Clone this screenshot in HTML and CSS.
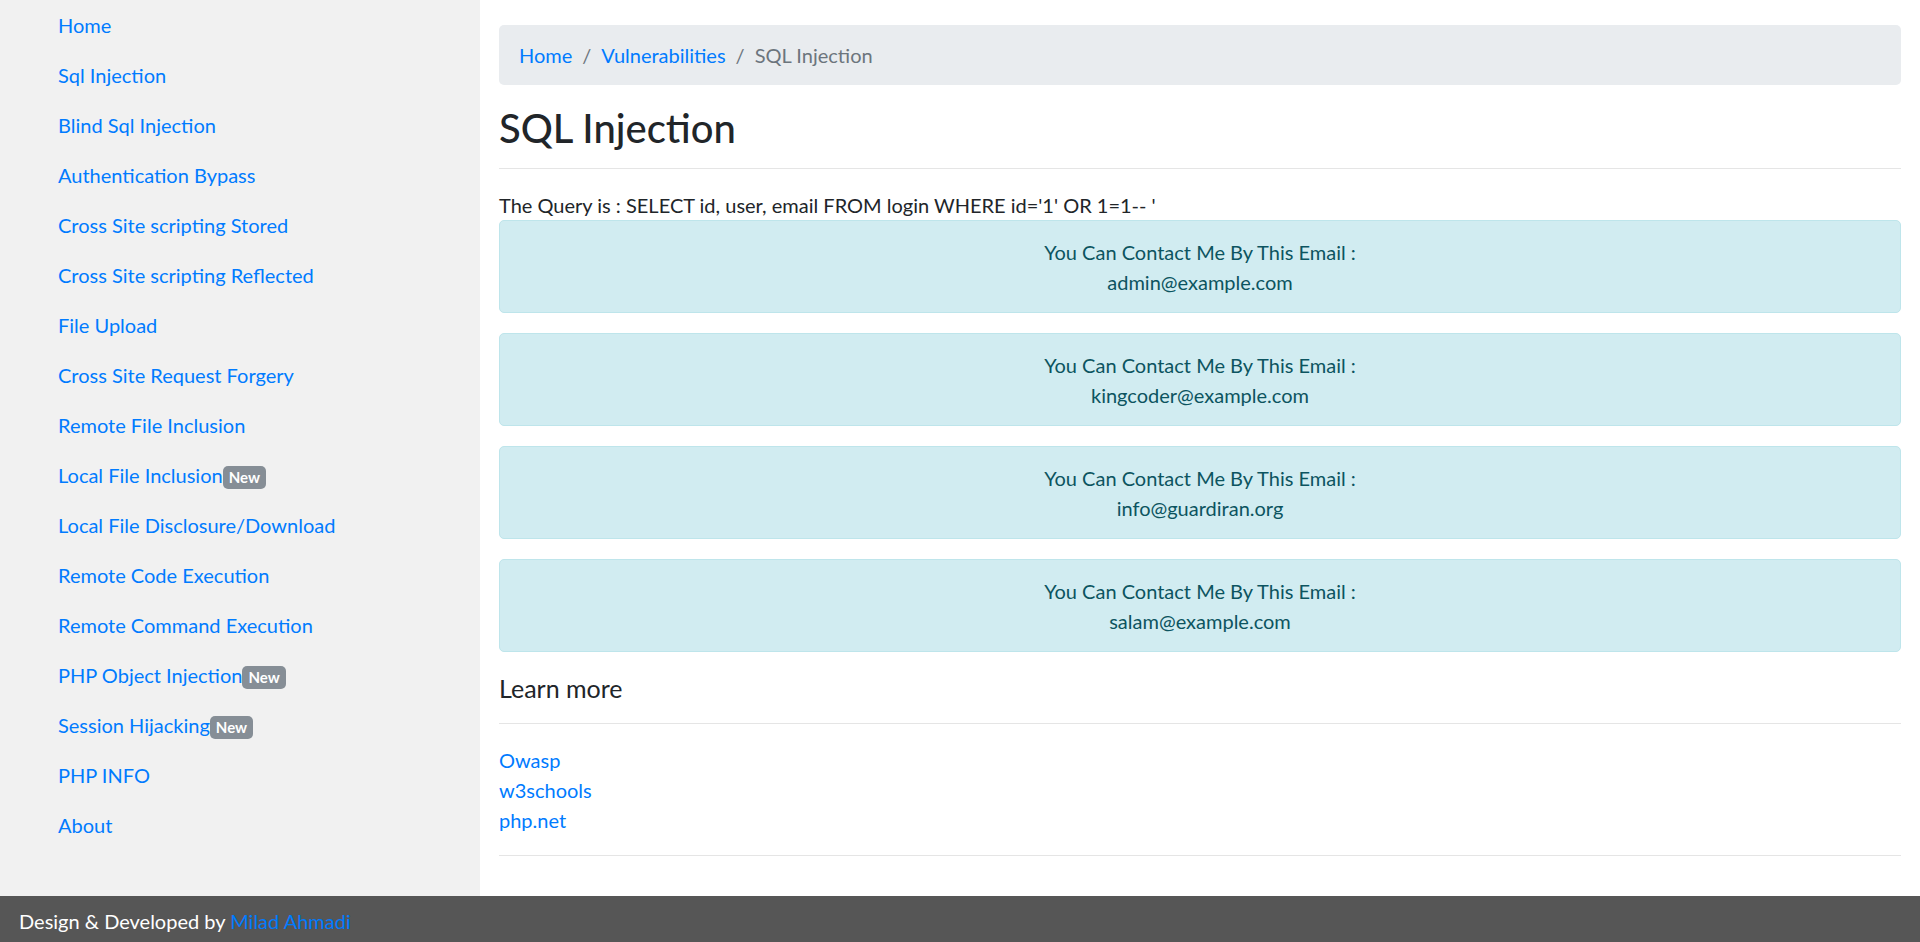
FILE: index.html
```html
<!DOCTYPE html>
<html lang="en">
<head>
<meta charset="utf-8">
<title>SQL Injection</title>
<link rel="stylesheet" href="styles.css">
</head>
<body>
<div class="page">
  <aside class="sidebar">
    <ul class="nav">
      <li><a class="nav-link" href="#">Home</a></li>
      <li><a class="nav-link" href="#">Sql Injection</a></li>
      <li><a class="nav-link" href="#">Blind Sql Injection</a></li>
      <li><a class="nav-link" href="#">Authentication Bypass</a></li>
      <li><a class="nav-link" href="#">Cross Site scripting Stored</a></li>
      <li><a class="nav-link" href="#">Cross Site scripting Reflected</a></li>
      <li><a class="nav-link" href="#">File Upload</a></li>
      <li><a class="nav-link" href="#">Cross Site Request Forgery</a></li>
      <li><a class="nav-link" href="#">Remote File Inclusion</a></li>
      <li><a class="nav-link" href="#">Local File Inclusion<span class="badge">New</span></a></li>
      <li><a class="nav-link" href="#">Local File Disclosure/Download</a></li>
      <li><a class="nav-link" href="#">Remote Code Execution</a></li>
      <li><a class="nav-link" href="#">Remote Command Execution</a></li>
      <li><a class="nav-link" href="#">PHP Object Injection<span class="badge">New</span></a></li>
      <li><a class="nav-link" href="#">Session Hijacking<span class="badge">New</span></a></li>
      <li><a class="nav-link" href="#">PHP INFO</a></li>
      <li><a class="nav-link" href="#">About</a></li>
    </ul>
  </aside>
  <main class="main">
    <nav aria-label="breadcrumb">
      <ol class="breadcrumb">
        <li class="breadcrumb-item"><a href="#">Home</a></li>
        <li class="breadcrumb-item"><a href="#">Vulnerabilities</a></li>
        <li class="breadcrumb-item active">SQL Injection</li>
      </ol>
    </nav>
    <h1 class="title">SQL Injection</h1>
    <hr class="rule rule-title">
    <p class="query">The Query is : SELECT id, user, email FROM login WHERE id='1' OR 1=1-- '</p>
    <div class="alert">You Can Contact Me By This Email :<br>admin@example.com</div>
    <div class="alert">You Can Contact Me By This Email :<br>kingcoder@example.com</div>
    <div class="alert">You Can Contact Me By This Email :<br>info@guardiran.org</div>
    <div class="alert">You Can Contact Me By This Email :<br>salam@example.com</div>
    <h5 class="learn">Learn more</h5>
    <hr class="rule rule-learn">
    <div class="links">
      <a href="#">Owasp</a>
      <a href="#">w3schools</a>
      <a href="#">php.net</a>
    </div>
    <hr class="rule rule-end">
  </main>
</div>
<footer class="footer">Design &amp; Developed by <a href="#">Milad Ahmadi</a></footer>
</body>
</html>
```
FILE: styles.css
```css
html, body {
  margin: 0;
  padding: 0;
  height: 100%;
}
body {
  display: flex;
  flex-direction: column;
  font-family: Lato, "Open Sans", sans-serif;
  font-size: 20px;
  line-height: 30px;
  color: #212529;
  background: #fff;
  overflow: hidden;
}
a {
  color: #007bff;
  text-decoration: none;
}
.page {
  flex: 1;
  display: flex;
  min-height: 0;
}
.sidebar {
  width: 480px;
  flex: 0 0 480px;
  background: #f1f1f1;
}
.nav {
  list-style: none;
  margin: 0;
  padding: 0;
}
.nav-link {
  display: block;
  padding: 10px 0 10px 58px;
}
.badge {
  display: inline-block;
  background: #868e96;
  color: #fff;
  font-size: 15px;
  font-weight: 700;
  line-height: 1;
  padding: 4px 6px;
  border-radius: 5px;
  vertical-align: baseline;
}
.main {
  flex: 1;
  padding: 25px 19px 0;
  min-width: 0;
}
.breadcrumb {
  display: flex;
  list-style: none;
  margin: 0 0 19px;
  padding: 15px 20px;
  background: #e9ecef;
  border-radius: 5px;
}
.breadcrumb-item + .breadcrumb-item {
  padding-left: 10px;
}
.breadcrumb-item + .breadcrumb-item::before {
  content: "/";
  padding-right: 10px;
  color: #6c757d;
}
.breadcrumb-item.active {
  color: #6c757d;
}
.title {
  margin: 0;
  font-size: 40px;
  line-height: 48px;
  font-weight: 500;
}
.rule {
  border: 0;
  border-top: 1px solid rgba(0, 0, 0, 0.1);
  height: 0;
}
.rule-title {
  margin: 16px 0 21px;
}
.query {
  margin: 0;
}
.alert {
  padding: 16px 25px 15px;
  margin-bottom: 20px;
  border: 1px solid #bee5eb;
  border-radius: 5px;
  background: #d1ecf1;
  color: #0c5460;
  text-align: center;
}
.learn {
  margin: 21px 0 0;
  font-size: 25px;
  line-height: 30px;
  font-weight: 400;
}
.rule-learn {
  margin: 20px 0 21px;
}
.links {
  display: flex;
  flex-direction: column;
  align-items: flex-start;
}
.rule-end {
  margin: 20px 0 0;
}
.footer {
  flex: 0 0 46px;
  box-sizing: border-box;
  height: 46px;
  padding: 10px 19px 6px;
  background: #565656;
  color: #fff;
}
```
